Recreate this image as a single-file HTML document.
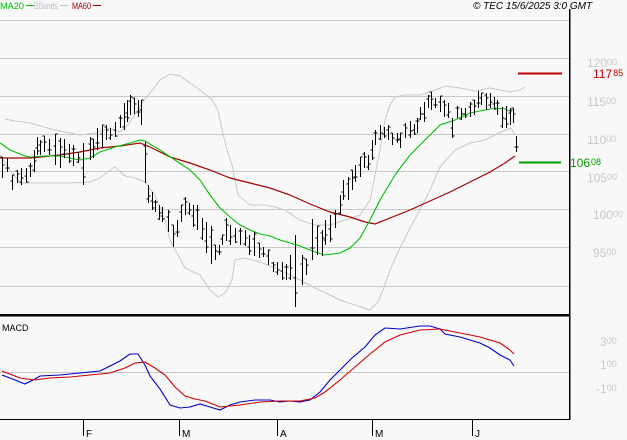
<!DOCTYPE html>
<html><head><meta charset="utf-8">
<style>
html,body{margin:0;padding:0;background:#f8f8f8;}
body{width:627px;height:440px;overflow:hidden;font-family:"Liberation Sans",sans-serif;}
svg{display:block}
text{font-family:"Liberation Sans",sans-serif;}
</style></head><body>
<svg id="s" width="627" height="440" xmlns="http://www.w3.org/2000/svg" shape-rendering="crispEdges">
<rect width="627" height="440" fill="#f8f8f8"/>
<g stroke="#c8c8c8" stroke-width="1">
<line x1="0" y1="20.5" x2="569" y2="20.5"/>
<line x1="0" y1="58.5" x2="569" y2="58.5"/>
<line x1="0" y1="96.5" x2="569" y2="96.5"/>
<line x1="0" y1="134.5" x2="569" y2="134.5"/>
<line x1="0" y1="171.5" x2="569" y2="171.5"/>
<line x1="0" y1="209.5" x2="569" y2="209.5"/>
<line x1="0" y1="247.5" x2="569" y2="247.5"/>
<line x1="0" y1="286.5" x2="569" y2="286.5"/>
<line x1="0" y1="372.5" x2="569" y2="372.5"/>
</g>
<g id="lines" fill="none" shape-rendering="auto"></g>
<g id="bars" stroke="#000" stroke-width="1.2"></g>
<line x1="569.5" y1="9" x2="569.5" y2="420" stroke="#000" stroke-width="1.5"/>
<line x1="0" y1="315" x2="570" y2="315" stroke="#000" stroke-width="2.5"/>
<line x1="0" y1="419.5" x2="570" y2="419.5" stroke="#000" stroke-width="1.2"/>
<g stroke="#000" stroke-width="1.2">
<line x1="83.5" y1="419" x2="83.5" y2="436"/>
<line x1="179.5" y1="419" x2="179.5" y2="436"/>
<line x1="277.5" y1="419" x2="277.5" y2="436"/>
<line x1="372.5" y1="419" x2="372.5" y2="436"/>
<line x1="472.5" y1="419" x2="472.5" y2="436"/>
</g>
<g font-size="10" fill="#000">
<text x="86" y="437">F</text><text x="182" y="437">M</text><text x="280" y="437">A</text><text x="375" y="437">M</text><text x="475" y="437">J</text>
<text x="2" y="331" font-size="9">MACD</text>
<text x="473" y="9" font-size="10" font-style="italic">© TEC 15/6/2025 3:0 GMT</text>
</g>
<g font-size="9">
<text x="0" y="9" fill="#00c000" textLength="24" lengthAdjust="spacingAndGlyphs">MA20</text><line x1="26" y1="5.5" x2="34" y2="5.5" stroke="#00c000"/>
<text x="34" y="9" fill="#c0c0c0" textLength="24" lengthAdjust="spacingAndGlyphs">BBands</text><line x1="60" y1="5.5" x2="68" y2="5.5" stroke="#c0c0c0"/>
<text x="72" y="9" fill="#a00000" textLength="19" lengthAdjust="spacingAndGlyphs">MA60</text><line x1="93" y1="5.5" x2="101" y2="5.5" stroke="#a00000"/>
</g>
<g fill="#c8c8c8">
<text x="587" y="67" font-size="12">120<tspan font-size="9" dy="-2">00</tspan></text>
<text x="587" y="106" font-size="12">115<tspan font-size="9" dy="-2">00</tspan></text>
<text x="587" y="144" font-size="12">110<tspan font-size="9" dy="-2">00</tspan></text>
<text x="587" y="182" font-size="12">105<tspan font-size="9" dy="-2">00</tspan></text>
<text x="593" y="219" font-size="12">100<tspan font-size="9" dy="-2">00</tspan></text>
<text x="593" y="257" font-size="12">95<tspan font-size="9" dy="-2">00</tspan></text>
<text x="600" y="346" font-size="12">3<tspan font-size="9" dy="-2">00</tspan></text>
<text x="600" y="369" font-size="12">1<tspan font-size="9" dy="-2">00</tspan></text>
<text x="596" y="393" font-size="12">-1<tspan font-size="9" dy="-2">00</tspan></text>
</g>
<line x1="518" y1="73.5" x2="562" y2="73.5" stroke="#c00000" stroke-width="2"/>
<text x="593" y="78" font-size="12" fill="#c00000">117<tspan font-size="9" dy="-2" dx="1">85</tspan></text>
<line x1="519" y1="162.5" x2="561" y2="162.5" stroke="#00a000" stroke-width="2"/>
<text x="570" y="167" font-size="12" fill="#00a000">106<tspan font-size="9" dy="-2" dx="1">08</tspan></text>
</svg>
<script>
var NS="http://www.w3.org/2000/svg";
function pl(pts,col,w){var p=document.createElementNS(NS,"polyline");p.setAttribute("points",pts.map(function(a){return a.join(",")}).join(" "));p.setAttribute("stroke",col);p.setAttribute("stroke-width",w||1);p.setAttribute("fill","none");document.getElementById("lines").appendChild(p);}
pl([[5,119],[15,121],[30,123],[55,130],[70,133],[80,135],[95,133],[110,128],[120,132],[128,125],[138,110],[145,99],[150,93],[160,80],[170,74],[180,76],[200,90],[212,100],[218,110],[222,130],[227,150],[232,165],[238,195],[250,205],[265,205],[275,207],[285,210],[300,220],[315,225],[330,225],[345,220],[360,215],[370,200],[380,150],[385,120],[390,105],[395,97],[405,95],[420,95],[435,90],[445,86],[460,88],[475,91],[490,88],[500,90],[510,92],[520,90],[525,87]],"#c8c8c8");
pl([[0,155],[10,170],[20,183],[40,183],[70,183],[90,182],[100,178],[110,170],[115,167],[125,176],[135,178],[145,182],[155,195],[165,220],[170,240],[185,268],[200,275],[210,290],[218,297],[225,293],[232,280],[235,260],[245,258],[260,262],[275,268],[290,275],[300,280],[315,288],[330,295],[340,300],[355,305],[370,310],[378,302],[383,290],[390,270],[400,248],[410,228],[420,210],[430,190],[440,167],[455,150],[470,143],[485,140],[495,135],[505,130],[511,128],[515,135]],"#c8c8c8");
pl([[0,158],[30,158],[60,155],[80,152],[100,148],[120,146],[140,143],[150,147],[170,157],[190,163],[210,170],[230,178],[250,183],[270,188],[290,195],[310,204],[330,212],[350,217],[365,222],[375,224],[390,218],[410,210],[430,201],[450,192],[470,182],[490,172],[505,163],[515,156]],"#a00000",1.2);
pl([[0,143],[10,150],[25,156],[30,157],[45,156],[60,156],[70,158],[80,160],[90,158],[100,152],[115,147],[130,143],[140,140],[145,141],[160,150],[175,160],[190,170],[200,180],[210,195],[220,208],[230,217],[240,225],[250,230],[260,234],[270,236],[280,240],[290,243],[300,246],[315,252],[325,255],[340,253],[350,248],[360,238],[370,220],[380,200],[395,175],[410,155],[425,140],[440,125],[455,120],[470,113],[485,110],[495,108],[505,109],[512,112]],"#00c000",1.1);
pl([[2,375],[15,380],[25,384],[35,379],[40,376],[60,375],[80,373],[100,371],[110,366],[120,361],[130,354],[138,354],[145,365],[150,376],[160,389],[170,405],[180,408],[190,407],[200,404],[210,407],[220,410],[230,405],[240,402],[255,400],[270,400],[280,402],[290,401],[300,402],[310,400],[320,392],[330,380],[340,370],[352,358],[365,347],[375,335],[385,328],[400,329],[420,326],[430,326],[440,329],[445,334],[460,337],[470,340],[480,343],[490,348],[500,355],[510,360],[514,366]],"#0000d0",1.1);
pl([[2,371],[20,378],[35,380],[50,378],[70,377],[90,375],[110,373],[125,368],[135,363],[145,362],[155,368],[165,375],[175,387],[185,396],[195,399],[205,401],[220,407],[240,405],[260,402],[280,401],[300,401],[315,398],[325,392],[340,380],[355,367],[370,354],[385,342],[400,335],[420,330],[440,329],[460,333],[480,337],[500,343],[510,350],[514,354]],"#d00000",1.1);
var B=[[2,157,178],[7,158,172],[12,175,190],[17,170,183],[21,168,185],[26,168,183],[30,163,177],[34,150,172],[37,137,155],[40,140,155],[44,136,152],[49,139,155],[55,134,165],[60,138,168],[64,139,158],[69,144,163],[73,145,166],[78,152,163],[83,143,185],[90,137,160],[93,139,158],[97,128,150],[102,125,148],[106,125,140],[110,128,140],[115,122,137],[120,115,128],[124,103,130],[127,100,122],[130,95,115],[134,98,114],[138,100,117],[141,100,125],[145,142,183],[148,185,203],[152,192,210],[155,200,212],[159,205,220],[162,207,222],[168,210,232],[173,225,247],[177,220,237],[181,205,222],[185,197,215],[189,203,215],[193,205,227],[197,205,230],[202,218,240],[206,222,253],[211,226,264],[215,245,260],[219,245,255],[222,235,245],[226,218,241],[230,225,245],[235,228,243],[240,228,245],[245,230,246],[249,235,255],[254,232,256],[259,243,258],[263,247,257],[268,250,265],[273,262,272],[277,262,275],[282,262,280],[286,264,280],[290,255,280],[295,235,307],[302,255,285],[306,259,275],[312,219,260],[317,226,255],[322,230,256],[325,220,245],[330,215,242],[335,210,228],[340,195,215],[343,180,200],[348,177,200],[352,170,190],[355,165,182],[360,157,177],[364,152,168],[368,155,170],[372,140,160],[375,130,145],[380,125,140],[384,127,138],[388,125,140],[392,133,145],[397,133,143],[400,133,148],[405,123,138],[410,121,138],[414,124,135],[417,118,133],[420,107,120],[424,102,122],[428,95,108],[431,92,110],[435,98,108],[440,96,112],[444,100,117],[448,103,118],[452,118,138],[457,106,118],[461,108,120],[465,108,118],[470,102,117],[474,100,115],[478,91,108],[481,93,105],[486,93,110],[490,93,108],[494,97,110],[497,100,115],[502,107,128],[506,106,128],[510,108,125],[513,108,123],[516,136,152]];
var g=document.getElementById("bars");
B.forEach(function(b,i){var x=b[0]+0.5;var l=document.createElementNS(NS,"path");var o=b[1]+(b[2]-b[1])*((i*7)%10)/10,c=b[1]+(b[2]-b[1])*((i*3+4)%10)/10;
l.setAttribute("d","M"+x+" "+b[1]+"V"+b[2]+"M"+(x-2)+" "+Math.round(o)+"H"+x+"M"+x+" "+Math.round(c)+"H"+(x+2));g.appendChild(l);});
</script>
</body></html>
